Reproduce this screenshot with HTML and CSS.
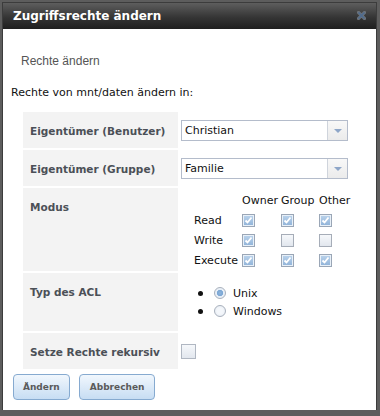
FILE: index.html
```html
<!DOCTYPE html>
<html lang="de">
<head>
  <meta charset="UTF-8" />
  <title>Zugriffsrechte ändern</title>
  <link rel="stylesheet" href="styles.css">
</head>
<body>

  <div class="dialog">
    <div class="titlebar">
      <span class="title">Zugriffsrechte ändern</span>
      <svg class="close" width="9" height="9" viewBox="0 0 9 9">
        <path d="M1.5 1.5 L7.5 7.5 M7.5 1.5 L1.5 7.5" stroke="#6c7278" stroke-width="3.2" stroke-linecap="square"/>
        <path d="M1.5 1.5 L7.5 7.5 M7.5 1.5 L1.5 7.5" stroke="#4f6b8e" stroke-width="1.7"/>
      </svg>
    </div>

    <div class="content">
      <p class="subtitle">Rechte ändern</p>
      <p class="intro">Rechte von mnt/daten ändern in:</p>

      <table class="form">
        <tr class="row-select">
          <th>Eigentümer (Benutzer)</th>
          <td>
            <div class="select"><span class="value">Christian</span><span class="arrow"></span></div>
          </td>
        </tr>
        <tr class="row-select">
          <th>Eigentümer (Gruppe)</th>
          <td>
            <div class="select"><span class="value">Familie</span><span class="arrow"></span></div>
          </td>
        </tr>
        <tr class="row-mode">
          <th>Modus</th>
          <td>
            <table class="perms">
              <tr>
                <td class="perm-label"></td>
                <td class="col-owner">Owner</td>
                <td class="col-group">Group</td>
                <td>Other</td>
              </tr>
              <tr>
                <td class="perm-label">Read</td>
                <td><span class="cb checked"><svg viewBox="0 0 11 11"><path d="M2.5 5.5 L4.5 7.5 L8.5 2.5" fill="none" stroke="#fff" stroke-width="1.8"/></svg></span></td>
                <td><span class="cb checked"><svg viewBox="0 0 11 11"><path d="M2.5 5.5 L4.5 7.5 L8.5 2.5" fill="none" stroke="#fff" stroke-width="1.8"/></svg></span></td>
                <td><span class="cb checked"><svg viewBox="0 0 11 11"><path d="M2.5 5.5 L4.5 7.5 L8.5 2.5" fill="none" stroke="#fff" stroke-width="1.8"/></svg></span></td>
              </tr>
              <tr>
                <td class="perm-label">Write</td>
                <td><span class="cb checked"><svg viewBox="0 0 11 11"><path d="M2.5 5.5 L4.5 7.5 L8.5 2.5" fill="none" stroke="#fff" stroke-width="1.8"/></svg></span></td>
                <td><span class="cb"></span></td>
                <td><span class="cb"></span></td>
              </tr>
              <tr>
                <td class="perm-label">Execute</td>
                <td><span class="cb checked"><svg viewBox="0 0 11 11"><path d="M2.5 5.5 L4.5 7.5 L8.5 2.5" fill="none" stroke="#fff" stroke-width="1.8"/></svg></span></td>
                <td><span class="cb checked"><svg viewBox="0 0 11 11"><path d="M2.5 5.5 L4.5 7.5 L8.5 2.5" fill="none" stroke="#fff" stroke-width="1.8"/></svg></span></td>
                <td><span class="cb checked"><svg viewBox="0 0 11 11"><path d="M2.5 5.5 L4.5 7.5 L8.5 2.5" fill="none" stroke="#fff" stroke-width="1.8"/></svg></span></td>
              </tr>
            </table>
          </td>
        </tr>
        <tr class="row-acl">
          <th>Typ des ACL</th>
          <td>
            <ul class="acl">
              <li><span class="bullet"></span><span class="radio checked"></span>Unix</li>
              <li><span class="bullet"></span><span class="radio"></span>Windows</li>
            </ul>
          </td>
        </tr>
        <tr class="row-rec">
          <th>Setze Rechte rekursiv</th>
          <td><span class="cb big"></span></td>
        </tr>
      </table>

      <div class="buttons">
        <button class="btn">Ändern</button>
        <button class="btn wide">Abbrechen</button>
      </div>
    </div>
  </div>

</body>
</html>
```

FILE: styles.css
```css
body {
  margin: 0;
  background: #5d5d5d;
  font-family: "DejaVu Sans", Verdana, sans-serif;
  font-size: 11px;
  color: #111;
}

.dialog {
  margin: 3px 4px 0 3px;
  height: 407px;
  background: #ffffff;
  box-shadow: 0 0 0 1px #3c3c3c;
}

.titlebar {
  height: 26px;
  display: flex;
  align-items: center;
  justify-content: space-between;
  padding: 0 10px;
  background: linear-gradient(#5e5e5e, #353535 55%, #1f1f1f);
  color: #ffffff;
}

.title {
  font-weight: bold;
  font-size: 12px;
}

.close {
  margin-top: -2px;
}

.content {
  padding-top: 25px;
}

.subtitle {
  margin: 0 0 18px 18px;
  font-family: "Liberation Sans", Arial, sans-serif;
  font-size: 12px;
  line-height: 14px;
  color: #555;
}

.intro {
  margin: 0 0 10px 8px;
  line-height: 14px;
}

.form {
  margin-left: 18px;
  border-collapse: separate;
  border-spacing: 2px;
}

.form th {
  width: 141px;
  padding: 12px 7px 0;
  background: #f3f3f3;
  text-align: left;
  vertical-align: top;
  font-size: 10.5px;
  line-height: 14px;
  color: #4b5057;
  white-space: nowrap;
}

.form > tbody > tr > td {
  width: 175px;
  padding: 0 0 0 1px;
  vertical-align: middle;
}

.row-select,
.row-rec {
  height: 36px;
}

.row-mode {
  height: 83px;
}

.row-acl {
  height: 57px;
}

.form > tbody > .row-mode > td,
.form > tbody > .row-acl > td {
  vertical-align: top;
}

.select {
  display: flex;
  width: 165px;
  height: 19px;
  border: 1px solid #b4bccb;
  background: #fff;
}

.select .value {
  flex: 1;
  padding-left: 3px;
  line-height: 19px;
}

.select .arrow {
  width: 19px;
  border-left: 1px solid #cfd4dc;
  background: linear-gradient(#f8f8f8, #ebebeb);
  position: relative;
}

.select .arrow::after {
  content: "";
  position: absolute;
  left: 6px;
  top: 8px;
  border-left: 4px solid transparent;
  border-right: 4px solid transparent;
  border-top: 4px solid #8ea6c8;
}

.perms {
  margin: 2px 0 0 13px;
  border-collapse: collapse;
}

.perms td {
  height: 20px;
  padding: 0;
  vertical-align: middle;
  white-space: nowrap;
}

.perm-label {
  width: 48px;
}

.col-owner {
  width: 39px;
}

.col-group {
  width: 38px;
}

.cb {
  display: block;
  box-sizing: border-box;
  width: 13px;
  height: 13px;
  border: 1px solid #a6adb8;
  background: linear-gradient(#f6f8fb, #e2e7ee);
}

.cb.checked {
  border-color: #9aa6b6;
  background: linear-gradient(#bcd4ec, #8fb2d8);
  box-shadow: inset 0 0 0 1px #e8f0f8;
}

.cb svg {
  display: block;
  width: 11px;
  height: 11px;
}

.cb.big {
  width: 15px;
  height: 15px;
  border-color: #b0b7c2;
}

.acl {
  list-style: none;
  margin: 11px 0;
  padding: 0;
}

.acl li {
  display: flex;
  align-items: center;
  height: 18px;
}

.bullet {
  width: 5px;
  height: 5px;
  margin-left: 17px;
  border-radius: 50%;
  background: #111;
}

.radio {
  box-sizing: border-box;
  width: 12px;
  height: 12px;
  margin: 0 7px 0 11px;
  border: 1px solid #a8b0bc;
  border-radius: 50%;
  background: radial-gradient(circle, #f4f7fb 40%, #e2e8f0);
}

.radio.checked {
  background: radial-gradient(circle, #8fb5dc 0, #7aa6d4 40%, #e6eef7 48%, #f2f5f9);
}

.buttons {
  display: flex;
  gap: 9px;
  margin: 3px 0 0 10px;
}

.btn {
  height: 26px;
  padding: 0 9px;
  border: 1px solid #86aad0;
  border-radius: 4px;
  background: linear-gradient(#f1f7fd, #c7ddf3);
  font-family: "DejaVu Sans", Verdana, sans-serif;
  font-weight: bold;
  font-size: 9px;
  color: #5a5a5a;
}

.btn.wide {
  padding: 0 10px;
}
```
